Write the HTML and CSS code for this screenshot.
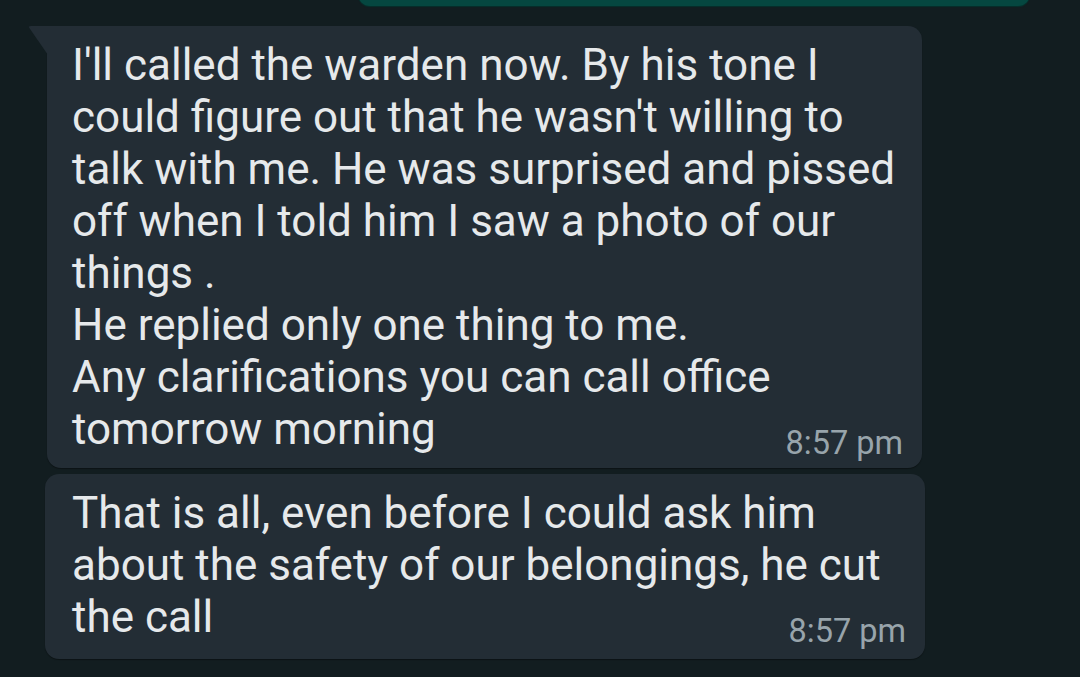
FILE: index.html
```html
<!DOCTYPE html>
<html>
<head>
<meta charset="utf-8">
<link rel="stylesheet" href="styles.css">
</head>
<body>
<div class="chat">
  <div class="out-bubble"></div>
  <div class="bubble bubble-first">
    <div class="msg">I'll called the warden now. By his tone I<br>could figure out that he wasn't willing to<br>talk with me. He was surprised and pissed<br>off when I told him I saw a photo of our<br>things .<br>He replied only one thing to me.<br>Any clarifications you can call office<br>tomorrow morning</div>
    <div class="time">8:57 pm</div>
  </div>
  <div class="bubble bubble-second">
    <div class="msg">That is all, even before I could ask him<br>about the safety of our belongings, he cut<br>the call</div>
    <div class="time">8:57 pm</div>
  </div>
</div>
</body>
</html>
```
FILE: styles.css
```css
html, body {
  margin: 0;
  padding: 0;
  background: #121d20;
  height: 100%;
  overflow: hidden;
}
.chat {
  display: flex;
  flex-direction: column;
  font-family: Roboto, "Liberation Sans", sans-serif;
}
.out-bubble {
  margin-left: 358px;
  width: 672px;
  height: 20px;
  margin-top: -14px;
  background: #054740;
  border-radius: 0 0 12px 12px;
  box-shadow: 0 1px 1px #06302c;
}
.bubble {
  position: relative;
  background: #232d35;
  border-radius: 14px;
  box-shadow: 0 1px 1px rgba(0, 0, 0, 0.35);
  display: flex;
  flex-direction: column;
  box-sizing: border-box;
  padding: 13px 19px 10px 25px;
}
.bubble-first {
  margin-top: 20px;
  margin-left: 47px;
  width: 875px;
  height: 442px;
  border-top-left-radius: 0;
}
.bubble-first::before {
  content: "";
  position: absolute;
  left: -19px;
  top: 0;
  width: 20px;
  height: 29px;
  background: #232d35;
  clip-path: polygon(0 0, 100% 0, 100% 100%);
  border-top-left-radius: 3px;
}
.bubble-second {
  margin-top: 6px;
  margin-left: 45px;
  width: 880px;
  height: 185px;
  padding-left: 27px;
}
.msg {
  color: #e6e9eb;
  font-size: 44px;
  line-height: 52px;
  white-space: nowrap;
}
.time {
  align-self: flex-end;
  color: #98a4ab;
  font-size: 32.5px;
  line-height: 32px;
  margin-top: -28px;
}
```
